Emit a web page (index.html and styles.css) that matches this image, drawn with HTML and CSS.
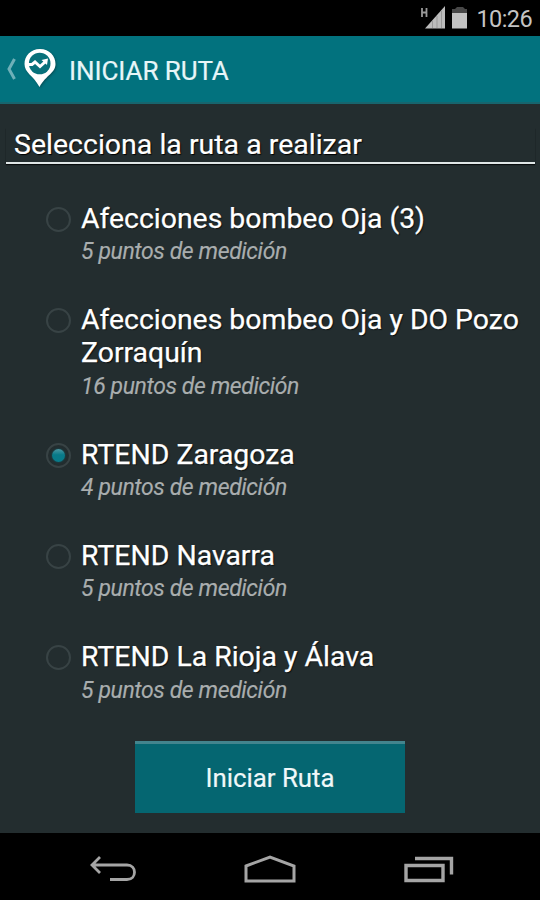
FILE: index.html
```html
<!DOCTYPE html>
<html lang="es">
<head>
<meta charset="utf-8">
<title>Iniciar ruta</title>
<link rel="stylesheet" href="styles.css">
</head>
<body>
<div class="status">
  <svg class="signal" width="50" height="26" viewBox="0 0 50 26">
    <path d="M2 1V10M6.500 1V10M2 5.500H6.500" fill="none" stroke="#999" stroke-width="1.800"/>
    <path d="M5 21.500L25 -1V21.500Z" fill="#bcbcbc"/>
    <path d="M12.500 13V21M17 9V21M21.500 4V21" stroke="#999" stroke-width="1"/>
    <path d="M32 6V2H35L37 0H43L45 2H47V6Z" fill="#484848"/>
    <path d="M32 6H47V21.500H32Z" fill="#c2c2c2"/>
  </svg>
  <span class="clock">10:26</span>
</div>
<header class="bar">
  <svg class="up" width="10" height="22" viewBox="0 0 10 22"><path d="M8.500 1L3 11L8.500 21" fill="none" stroke="#6eb0b8" stroke-width="3"/></svg>
  <svg class="pin" width="36" height="42" viewBox="0 0 36 42">
    <path d="M16 1C6.500 1 .500 8 .500 16C.500 25 9 27 15.500 39C22 27 31.500 25 31.500 16C31.500 8 25.500 1 16 1Z" fill="#fff"/>
    <circle cx="15.700" cy="15.500" r="10.800" fill="#08717b"/>
    <path d="M4 16.500H8L11 14L16 18.500L21 14" fill="none" stroke="#fff" stroke-width="3"/>
    <path d="M17.500 12L24 10.500L23 17Z" fill="#fff"/>
  </svg>
  <h1>INICIAR RUTA</h1>
</header>
<main>
  <h2><span>Selecciona la ruta a realizar</span></h2>
  <ul>
    <li><i class="radio"></i><div><b>Afecciones bombeo Oja (3)</b><em>5 puntos de medición</em></div></li>
    <li><i class="radio"></i><div><b>Afecciones bombeo Oja y DO Pozo<br>Zorraquín</b><em>16 puntos de medición</em></div></li>
    <li><i class="radio on"></i><div><b>RTEND Zaragoza</b><em>4 puntos de medición</em></div></li>
    <li><i class="radio"></i><div><b>RTEND Navarra</b><em>5 puntos de medición</em></div></li>
    <li><i class="radio"></i><div><b>RTEND La Rioja y Álava</b><em>5 puntos de medición</em></div></li>
  </ul>
  <button>Iniciar Ruta</button>
</main>
<nav>
  <svg width="46" height="28" viewBox="0 0 46 28"><path d="M10 2L2 10L10 18M2 10H37C47 10 47 24.500 37 24.500H20" fill="none" stroke="#a5a5a5" stroke-width="2.800"/></svg>
  <svg width="52" height="28" viewBox="0 0 52 28"><path d="M2 11L26 2L50 11V26H2Z" fill="none" stroke="#a5a5a5" stroke-width="3"/></svg>
  <svg width="50" height="28" viewBox="0 0 50 28"><path d="M2 10.500H39V25.500H2ZM11 3.500H47.500V19.500" fill="none" stroke="#a5a5a5" stroke-width="3.400"/></svg>
</nav>
</body>
</html>
```
FILE: styles.css
```css
* { box-sizing: border-box; margin: 0; padding: 0; }
body { width: 540px; height: 900px; overflow: hidden; display: flex; flex-direction: column; background: #232d2f; font-family: Roboto, sans-serif; color: #fff; }
.status { height: 36px; background: #000; display: flex; align-items: flex-start; padding: 7px 8px 0 0; justify-content: flex-end; }
.signal { margin-right: 6px; overflow: visible; }
.clock { font-size: 23.5px; letter-spacing: -.6px; line-height: 24px; color: #c4c4c4; }
.bar { height: 68px; background: #02727e; border-bottom: 2px solid #17656e; display: flex; align-items: center; padding-left: 6px; }
.up { margin-right: 8px; }
.pin { margin-right: 9px; filter: drop-shadow(1px 1px 1px #064f57); }
h1 { font-size: 26px; letter-spacing: -.08px; font-weight: 400; line-height: 30px; margin-top: 3px; color: #e8f6f8; white-space: nowrap; -webkit-text-stroke: .2px; }
main { height: 729px; display: flex; flex-direction: column; }
h2 { margin: 24px 5px 0 6px; height: 36px; padding-left: 8px; border-bottom: 2px solid #dfe6e7; box-shadow: 0 1px 1px #080c0d; font-size: 28.5px; font-weight: 400; line-height: 34px; white-space: nowrap; text-shadow: 1px 1px 1px #000; -webkit-text-stroke: .2px; }
ul { list-style: none; margin-top: 37.5px; }
li { display: flex; padding-left: 46px; margin-bottom: 34.3px; }
.radio { width: 25px; height: 25px; border: 2px solid #384345; border-radius: 50%; margin: 5px 10px 0 0; display: grid; place-items: center; }
.on::after { content: ""; width: 13px; height: 13px; border-radius: 50%; background: linear-gradient(#4c98a3, #087a89 45%); box-shadow: 0 0 2px #0a616c; }
b, em { display: block; white-space: nowrap; }
b { font-size: 28.4px; font-weight: 400; line-height: 33.5px; text-shadow: 1px 1px 1px #0a0e0f; -webkit-text-stroke: .25px; }
em { font-size: 23px; letter-spacing: -.4px; line-height: 33.5px; color: #a9adae; -webkit-text-stroke: .15px; }
button { width: 270px; height: 73px; margin: auto 0 20.5px 135px; border: 0; border-top: 3px solid #43858e; background: #056671; color: #f0f8f9; font: 25.8px Roboto, sans-serif; padding-bottom: 1px; -webkit-text-stroke: .2px; }
nav { height: 67px; background: #000; display: flex; padding: 22px 0 0 90px; gap: 108px; }
```
